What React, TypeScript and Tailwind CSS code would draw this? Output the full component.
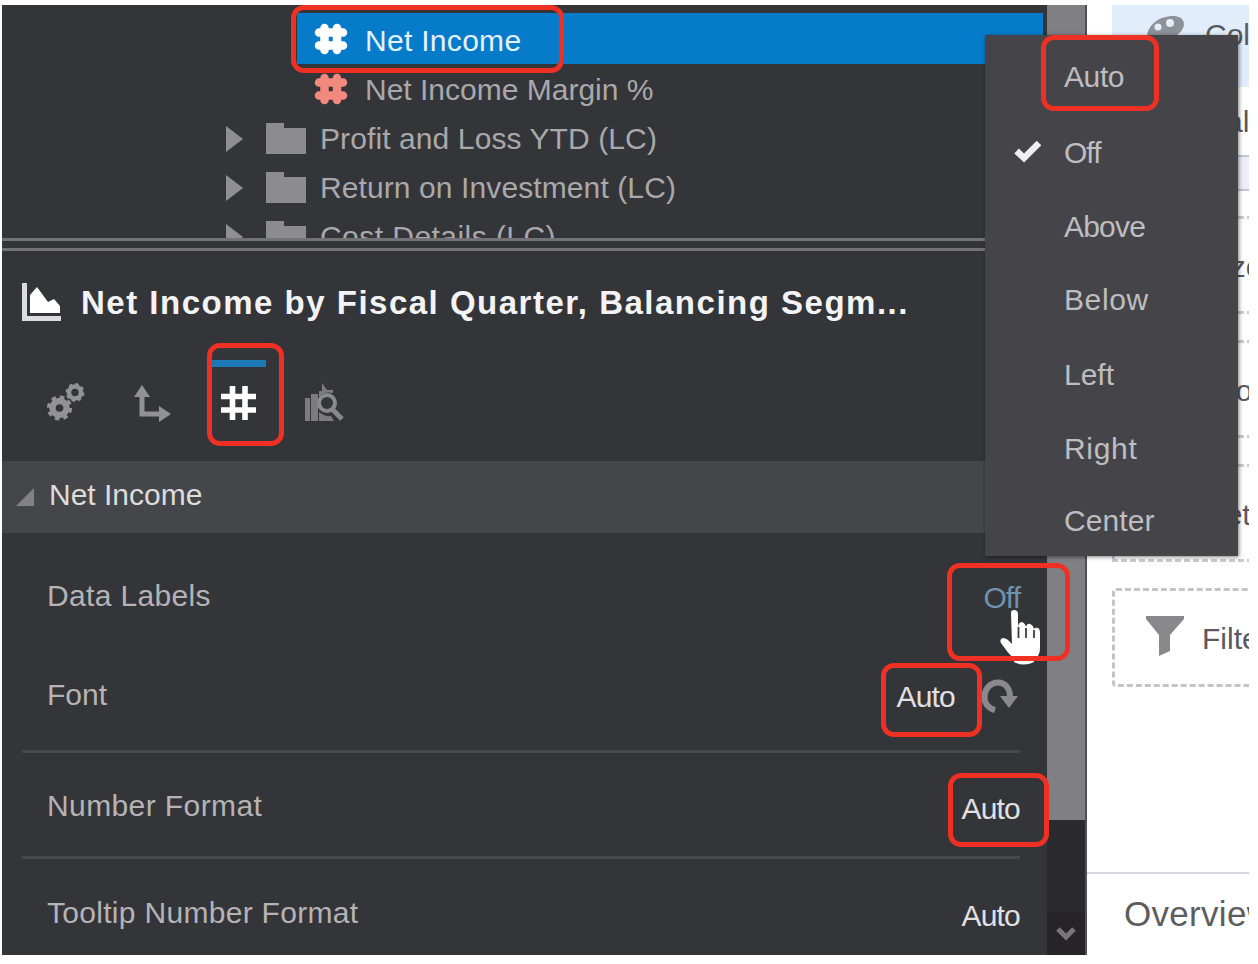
import React from "react";

type IconProps = { className?: string };

const FatHash = ({ className }: IconProps) => (
  <svg className={className} width="34" height="32" viewBox="0 0 34 32" fill="none" stroke="currentColor" strokeWidth="8.5" strokeLinecap="round">
    <path d="M10.500 5V27M23 5V27M5 9.500H29M5 22.500H29" />
  </svg>
);

const Folder = () => (
  <svg width="40" height="31" viewBox="0 0 40 31" fill="#8c8b90">
    <path d="M0 0H18V5H40V31H0Z" />
  </svg>
);

const Arrow = () => (
  <svg width="17" height="26" viewBox="0 0 17 26" fill="#8f8f91">
    <path d="M0 0L17 13L0 26Z" />
  </svg>
);

const AreaChart = () => (
  <svg width="39" height="38" viewBox="0 0 39 38">
    <path d="M2.500 0V35.500H39" fill="none" stroke="#dcdcde" strokeWidth="5" />
    <path d="M8 30V12L15 4L26 19L32 16L38 23V30Z" fill="#fff" />
  </svg>
);

const Gears = () => (
  <svg width="39" height="39" viewBox="0 0 39 39" fill="none" stroke="#929295">
    <circle cx="13.5" cy="25" r="7" strokeWidth="6.4" />
    <circle cx="13.5" cy="25" r="11" strokeWidth="3.2" strokeDasharray="4.6 4.04" />
    <circle cx="29" cy="9.500" r="6" strokeWidth="4.600" />
    <circle cx="29" cy="9.500" r="8.500" strokeWidth="1.800" strokeDasharray="3.400 3.280" />
  </svg>
);

const Axes = () => (
  <svg width="38" height="38" viewBox="0 0 38 38">
    <path d="M9 9V29H27" fill="none" stroke="#929295" strokeWidth="5" />
    <path d="M1 12L9 0L17 12ZM26 21L38 29L26 37Z" fill="#929295" />
  </svg>
);

const Hash = () => (
  <svg width="35" height="34" viewBox="0 0 35 34" fill="none" stroke="#fff" strokeWidth="5.6">
    <path d="M11.500 0V34M24 0V34M0 10.500H35M0 24H35" />
  </svg>
);

const ChartSearch = () => (
  <svg width="39" height="39" viewBox="0 0 39 39">
    <path d="M0 15H5V38H0ZM6 11H13V38H6ZM14 29Q20 34 26 33L29 38H14ZM14 14V8H17V0L22 7H28V10Q19 8 14 14Z" fill="#7c7c80" />
    <circle cx="22" cy="20" r="8" fill="none" stroke="#8b8b8f" strokeWidth="4" />
    <path d="M28 27L37 36" stroke="#87878a" strokeWidth="5" />
  </svg>
);

const Redo = () => (
  <svg width="38" height="36" viewBox="0 0 38 36">
    <path d="M14 31C7 29 3 24 3.500 17C4 9 10 3.500 17 3.500C24 3.500 29 9 29 18" fill="none" stroke="#8a8a8d" strokeWidth="6" />
    <path d="M19 17H37L28 29Z" fill="#8a8a8d" />
  </svg>
);

const Hand = () => (
  <svg width="42" height="56" viewBox="0 0 42 56" fill="#fff">
    <path d="M11 3Q11 0 14 0Q18 0 18 4V18Q18 12 22 12Q25 13 26 17Q27 13 30 14Q33 15 34 19Q35 17 38 18Q40 19 40 23V38Q40 46 34 50V52Q24 57 14 52V49Q7 42 1 33Q-1 29 3 28Q7 28 12 34Z" />
    <path d="M18.500 17V28M26 18V28M34 20V28" stroke="#3c3c42" strokeWidth="1.800" />
  </svg>
);

const Filter = () => (
  <svg width="38" height="40" viewBox="0 0 38 40" fill="#89898c">
    <path d="M0 0H38V3L24 19V35L13 40V19L0 3Z" />
  </svg>
);

const Palette = () => (
  <svg width="40" height="30" viewBox="0 0 40 30">
    <path d="M1 21C2 9 15 0 29 1C38 2 40 9 36 15C31 24 1 34 1 21Z" fill="#8e9198" />
    <circle cx="24" cy="8" r="4" fill="#e4edfa" />
    <circle cx="12" cy="12" r="3.500" fill="#e4edfa" />
  </svg>
);

const folders = [
  { label: "Profit and Loss YTD (LC)", tracking: "tracking-[0.1px]" },
  { label: "Return on Investment (LC)", tracking: "tracking-[0.1px]" },
  { label: "Cost Details (LC)", tracking: "tracking-[0.45px]" },
];

const menu = [
  { label: "Auto", box: "h-[79px] pt-[3px] tracking-[-0.4px]" },
  { label: "Off", box: "h-[76px] tracking-[-1px]", checked: true },
  { label: "Above", box: "h-[72px] tracking-[-0.8px]" },
  { label: "Below", box: "h-[75px] tracking-[0.6px]" },
  { label: "Left", box: "h-[74px]" },
  { label: "Right", box: "h-[74px] tracking-[0.7px]" },
  { label: "Center", box: "h-[71px] tracking-[0.1px]" },
];

const highlights = [
  "left-[291px] top-[5px] w-[273px] h-[68px]",
  "left-[207px] top-[343px] w-[77px] h-[103px]",
  "left-[1041px] top-[35px] w-[118px] h-[76px]",
  "left-[947px] top-[563px] w-[123px] h-[98px]",
  "left-[881px] top-[663px] w-[101px] h-[74px]",
  "left-[948px] top-[773px] w-[101px] h-[74px]",
];

function Tree() {
  return (
    <div className="h-[233px] shrink-0 overflow-hidden pt-[8px]">
      <div className="ml-[295px] mr-[4px] flex h-[51px] items-center bg-[#057bca] pl-[17px] tracking-[0.3px] text-[#e3f2fc]">
        <FatHash className="text-white" />
        <span className="ml-[17px] pt-[3px]">Net Income</span>
      </div>
      <div className="flex h-[50px] items-center pl-[312px] text-[#a9a8ab]">
        <FatHash className="text-[#f2897e]" />
        <span className="ml-[17px]">Net Income Margin %</span>
      </div>
      {folders.map((f) => (
        <div key={f.label} className="flex h-[49px] items-center pl-[224px] text-[#a9a8ab]">
          <Arrow />
          <span className="ml-[23px]"><Folder /></span>
          <span className={"ml-[14px] " + f.tracking}>{f.label}</span>
        </div>
      ))}
    </div>
  );
}

function Tabs() {
  return (
    <div className="flex h-[108px] shrink-0 pl-[44px]">
      <div className="w-[87px] pt-[30px]"><Gears /></div>
      <div className="w-[79px] pt-[32px]"><Axes /></div>
      <div className="w-[54px]">
        <div className="mt-[7px] h-[7px] bg-[#1b7ab5]" />
        <div className="ml-[9px] mt-[19px]"><Hash /></div>
      </div>
      <div className="ml-[39px] pt-[30px]"><ChartSearch /></div>
    </div>
  );
}

function Properties() {
  return (
    <div className="flex flex-col text-[#b5b3b6]">
      <div className="flex h-[126px] justify-between pl-[45px] pr-[27px] leading-[126px]">
        <span className="tracking-[0.35px]">Data Labels</span>
        <span className="pt-[2px] tracking-[-1px] text-[#6e91b0]">Off</span>
      </div>
      <div className="flex h-[91px] justify-between pl-[45px] pr-[28px] leading-[72px]">
        <span>Font</span>
        <span className="flex pt-[2px] tracking-[-0.8px] text-[#e1e0e2]">
          Auto
          <span className="ml-[26px] mt-[18px]"><Redo /></span>
        </span>
      </div>
      <div className="ml-[20px] mr-[27px] h-[3px] bg-[#48494c]" />
      <div className="flex h-[103px] justify-between pl-[45px] pr-[27px] leading-[106px]">
        <span className="tracking-[0.4px]">Number Format</span>
        <span className="pt-[3px] tracking-[-0.8px] text-[#e1e0e2]">Auto</span>
      </div>
      <div className="ml-[20px] mr-[27px] h-[3px] bg-[#48494c]" />
      <div className="flex h-[96px] justify-between pl-[45px] pr-[27px] leading-[107px]">
        <span className="tracking-[0.3px]">Tooltip Number Format</span>
        <span className="pt-[3px] tracking-[-0.8px] text-[#e1e0e2]">Auto</span>
      </div>
    </div>
  );
}

function Shelf({ label }: { label: string }) {
  return (
    <div className="mb-[26px] flex h-[98px] w-[240px] shrink-0 items-center border-[3px] border-dashed border-[#cbcbcf] pl-[89px] pt-[2px]">
      {label}
    </div>
  );
}

function Canvas() {
  return (
    <div className="flex w-[162px] shrink-0 flex-col overflow-hidden bg-white text-[#59595f]">
      <div className="ml-[25px] flex h-[867px] w-[240px] shrink-0 flex-col">
        <div className="flex h-[82px] shrink-0 bg-[#e2edfc] pl-[34px] pt-[10px]">
          <Palette />
          <span className="ml-[19px] leading-[40px]">Color</span>
        </div>
        <div className="h-[68px] shrink-0 pl-[94px] leading-[70px]">Balancing Segment</div>
        <div className="mb-[25px] h-[36px] shrink-0 border-y-2 border-[#c5c5d3] bg-[#eeeefa]" />
        <Shelf label="Size" />
        <Shelf label="Tooltip" />
        <Shelf label="Detail" />
        <div className="flex h-[99px] shrink-0 items-center rounded-[4px] border-[3px] border-dashed border-[#c4c4c7] pb-[3px] pl-[31px]">
          <Filter />
          <span className="ml-[18px] pt-[5px]">Filters</span>
        </div>
      </div>
      <div className="h-[83px] shrink-0 border-t-2 border-[#d6d5df] pl-[37px] text-[35px] leading-[80px] tracking-[0.3px] text-[#5d5d5f]">Overview</div>
    </div>
  );
}

export default function App() {
  return (
    <div className="relative h-[964px] w-[1258px] overflow-hidden whitespace-nowrap bg-white pl-[2px] pt-[5px] font-['Liberation_Sans',Arial,sans-serif] text-[30px]">
      <div className="flex h-[950px] w-[1247px] overflow-hidden">
        <div className="flex w-[1045px] shrink-0 flex-col overflow-hidden bg-[#343539]">
          <Tree />
          <div className="h-[13px] shrink-0 border-y-[3px] border-[#737377]" />
          <div className="flex h-[102px] shrink-0 items-center pl-[20px] text-[33px] font-bold tracking-[1.5px] text-[#f3f3f5]">
            <AreaChart />
            <span className="ml-[20px] pt-[2px]">Net Income by Fiscal Quarter, Balancing Segm...</span>
          </div>
          <Tabs />
          <div className="flex h-[72px] shrink-0 items-center bg-[#454649] pl-[14px] text-[#dddcdd]">
            <svg width="18" height="18" viewBox="0 0 18 18" fill="#828285"><path d="M18 0V18H0Z" /></svg>
            <span className="ml-[15px] pb-[5px]">Net Income</span>
          </div>
          <Properties />
        </div>
        <div className="flex w-[40px] shrink-0 flex-col border-r-2 border-[#505055] bg-[#2a2a2e]">
          <div className="h-[815px] bg-[#808084]" />
          <div className="mt-auto flex h-[42px] items-center justify-center bg-[#262429]">
            <svg width="20" height="16" viewBox="0 0 20 16" fill="none" stroke="#77777b" strokeWidth="5"><path d="M2 3L10 11L18 3" /></svg>
          </div>
        </div>
        <Canvas />
      </div>

      <div className="absolute left-[985px] top-[35px] flex h-[521px] w-[253px] flex-col bg-[#454549] text-[#bebdc0] shadow-[1px_1px_4px_rgba(0,0,0,0.5)]">
        {menu.map((m) => (
          <div key={m.label} className={"flex shrink-0 items-center " + m.box}>
            <span className="flex w-[79px] pl-[29px]">
              {m.checked && (
                <svg width="28" height="24" viewBox="0 0 28 24" fill="none" stroke="#eeeeef" strokeWidth="6.500"><path d="M2.500 11L10 18L25 3" /></svg>
              )}
            </span>
            <span>{m.label}</span>
          </div>
        ))}
      </div>
      <div className="absolute left-[1000px] top-[610px]"><Hand /></div>
      {highlights.map((h) => (
        <div key={h} className={"absolute rounded-[13px] border-[5px] border-[#ee3124] " + h} />
      ))}
    </div>
  );
}
